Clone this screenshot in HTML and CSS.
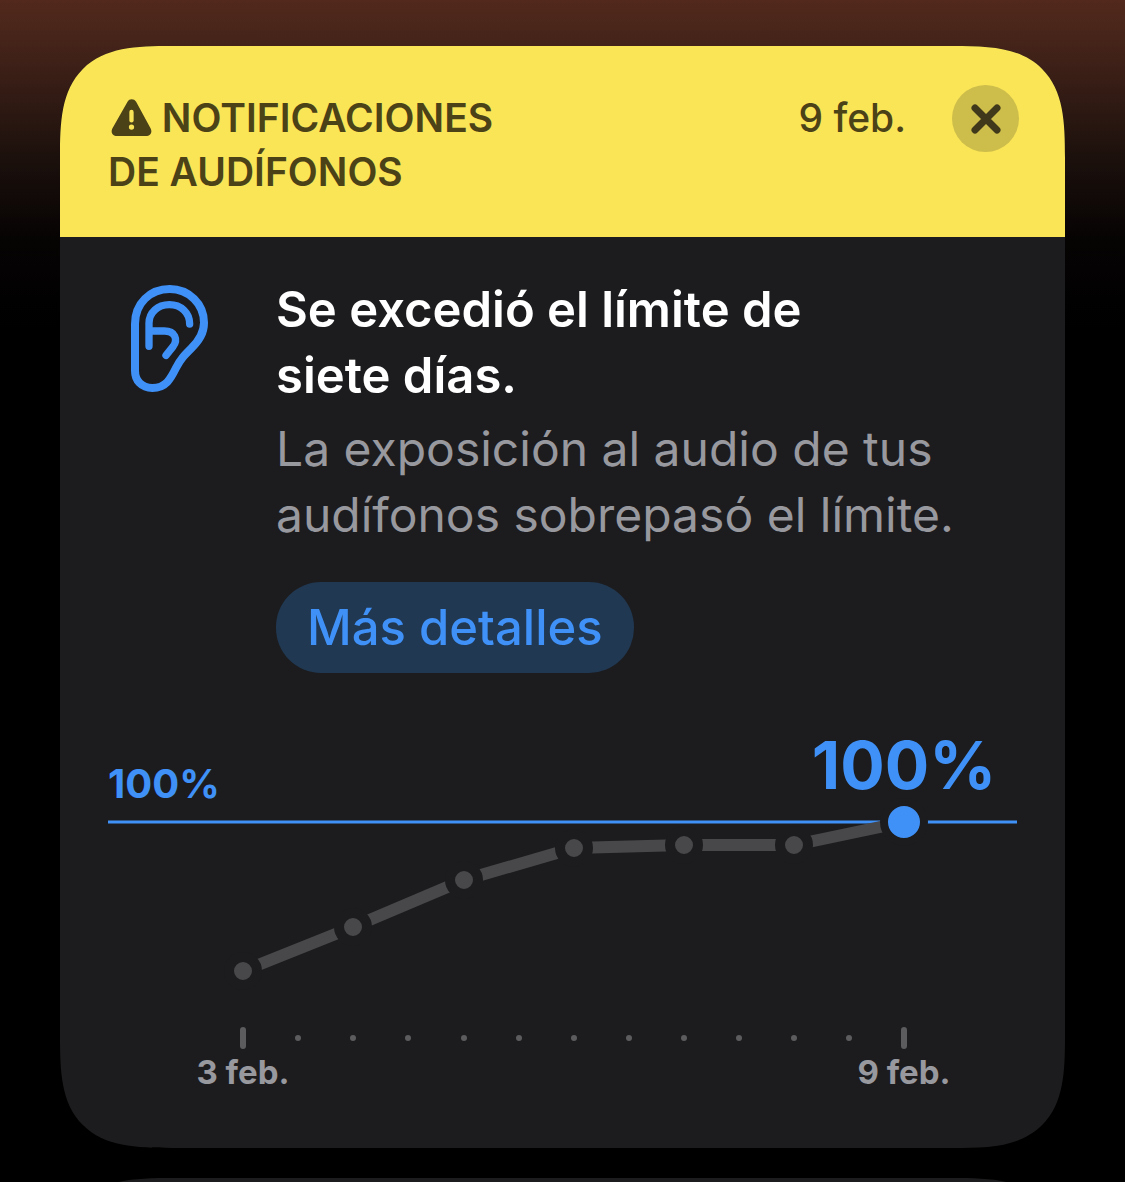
FILE: index.html
```html
<!DOCTYPE html>
<html lang="es">
<head>
    <meta charset="UTF-8">
    <meta name="viewport" content="width=device-width, initial-scale=1.0">
    <title>Notificaciones de audífonos</title>
    <link rel="stylesheet" href="styles.css">
</head>
<body>
    <main class="feed">
        <article class="card">
            <header class="card-header">
                <h1>
                    <svg class="warning-icon" viewBox="0 0 122 112" aria-hidden="true">
                        <path fill="currentColor" d="M49 8C54-2 69-2 75 8L119 89C125 101 118 112 105 112H17C4 112-3 101 3 89Z"/>
                        <path stroke="#fae557" stroke-width="13" stroke-linecap="round" d="M61 39V65"/>
                        <circle cx="61" cy="85" r="8" fill="#fae557"/>
                    </svg>
                    NOTIFICACIONES<br>DE AUDÍFONOS
                </h1>
                <time class="date" datetime="02-09">9 feb.</time>
                <button class="close" type="button" aria-label="Cerrar">
                    <svg viewBox="0 0 30 30" aria-hidden="true">
                        <path d="M4 4L26 26M26 4L4 26"/>
                    </svg>
                </button>
            </header>

            <section class="summary">
                <svg class="ear-icon" viewBox="48 45 231 321" aria-hidden="true">
                    <path stroke-width="24" d="M60 162C60 100 105 57 164 57C222 57 267 102 267 158C267 190 252 212 228 236C206 258 198 266 184 292C168 324 154 354 112 354C80 354 60 332 60 302Z"/>
                    <path stroke-width="22" d="M102 229V160C102 128 128 104 163 104C198 104 224 128 224 162M102 183H148C180 183 190 208 174 230L153 256"/>
                </svg>
                <div class="message">
                    <h2>Se excedió el límite de<br>siete días.</h2>
                    <p>La exposición al audio de tus<br>audífonos sobrepasó el límite.</p>
                    <button class="details" type="button">Más detalles</button>
                </div>
            </section>

            <svg class="chart" viewBox="0 -30 909 400" role="img" aria-label="Exposición del 3 al 9 de febrero">
                <text class="limit-label" x="0" y="68">100%</text>
                <text class="value-label" x="796" y="59">100%</text>
                <path class="limit-line" d="M0 92H909"/>
                <polyline class="trend" points="135,241 245,197 356,150 466,118 576,115 686,115 796,92"/>
                <g class="points">
                    <circle cx="135" cy="241" r="14"/>
                    <circle cx="245" cy="197" r="14"/>
                    <circle cx="356" cy="150" r="14"/>
                    <circle cx="466" cy="118" r="14"/>
                    <circle cx="576" cy="115" r="14"/>
                    <circle cx="686" cy="115" r="14"/>
                </g>
                <circle class="current" cx="796" cy="92" r="20"/>
                <path class="day" d="M135 300V316M796 300V316"/>
                <path class="half-day" d="M190 308h0M245 308h0M300 308h0M356 308h0M411 308h0M466 308h0M521 308h0M576 308h0M631 308h0M686 308h0M741 308h0"/>
                <text class="day-label" x="135" y="354">3 feb.</text>
                <text class="day-label" x="796" y="354">9 feb.</text>
            </svg>
        </article>
        <article class="card next-card"></article>
    </main>
</body>
</html>
```
FILE: styles.css
```css
* {
    box-sizing: border-box;
}

body {
    margin: 0;
    background: #000;
    font-family: Inter, "Liberation Sans", sans-serif;
}

.feed {
    display: flex;
    flex-direction: column;
    gap: 30px;
    height: 100vh;
    padding: 46px 60px 0;
    overflow: hidden;
    background: linear-gradient(#52291c 0, #3f2118 60px, #1b100c 160px, #060303 240px, #000 330px);
}

.card {
    flex: none;
    padding-bottom: 48px;
    border-radius: 84px;
    background: #1c1c1e;
    overflow: hidden;
}

.next-card {
    height: 300px;
}

@supports (corner-shape: superellipse(1.6)) {
    .card {
        border-radius: 112px;
        corner-shape: superellipse(1.6);
    }
}

.card-header {
    display: flex;
    align-items: flex-start;
    height: 191px;
    padding: 39px 46px 0 48px;
    background: #fae557;
    color: #4b4217;
}

h1 {
    flex: 1;
    margin: 6px 0 0;
    font-size: 39px;
    font-weight: 600;
    line-height: 54px;
}

.warning-icon {
    width: 41px;
    height: 37px;
    margin-left: 3px;
    vertical-align: -4px;
}

.date {
    margin: 6px 46px 0 0;
    font-size: 39px;
    font-weight: 500;
    line-height: 54px;
}

.close {
    display: flex;
    align-items: center;
    justify-content: center;
    width: 67px;
    height: 67px;
    padding: 0;
    border: none;
    border-radius: 50%;
    background: #cdbd4a;
    color: #40381a;
    cursor: pointer;
}

.close svg {
    width: 30px;
    height: 30px;
    fill: none;
    stroke: currentColor;
    stroke-width: 7;
    stroke-linecap: round;
}

.summary {
    display: flex;
    gap: 68px;
    padding: 40px 48px 0 71px;
}

.ear-icon {
    flex: none;
    width: 77px;
    height: 107px;
    margin-top: 8px;
    fill: none;
    stroke: #4091f7;
    stroke-linecap: round;
    stroke-linejoin: round;
}

h2,
.message p {
    margin: 0;
    line-height: 66px;
}

h2 {
    color: #fff;
    font-size: 49px;
    font-weight: 600;
}

.message p {
    margin-top: 7px;
    color: #98989f;
    font-size: 48px;
}

.details {
    display: block;
    height: 91px;
    margin-top: 34px;
    padding: 0 31px;
    border: none;
    border-radius: 45px;
    background: #203852;
    color: #4091f7;
    font-family: inherit;
    font-size: 49px;
    font-weight: 500;
    cursor: pointer;
}

.chart {
    display: block;
    width: calc(100% - 96px);
    margin: 27px 48px 0;
}

.limit-label,
.value-label {
    fill: #4091f7;
    font-weight: 700;
}

.limit-label {
    font-size: 40px;
}

.value-label {
    font-size: 66px;
    text-anchor: middle;
}

.limit-line {
    stroke: #4091f7;
    stroke-width: 3;
}

.trend {
    fill: none;
    stroke: #48484a;
    stroke-width: 12;
}

.points circle {
    fill: #48484a;
    stroke: #1c1c1e;
    stroke-width: 10;
}

.current {
    fill: #4091f7;
    stroke: #1c1c1e;
    stroke-width: 8;
}

.day,
.half-day {
    stroke: #5c5c5f;
    stroke-width: 6;
    stroke-linecap: round;
}

.day-label {
    fill: #98989f;
    font-size: 33px;
    font-weight: 700;
    text-anchor: middle;
}
```
